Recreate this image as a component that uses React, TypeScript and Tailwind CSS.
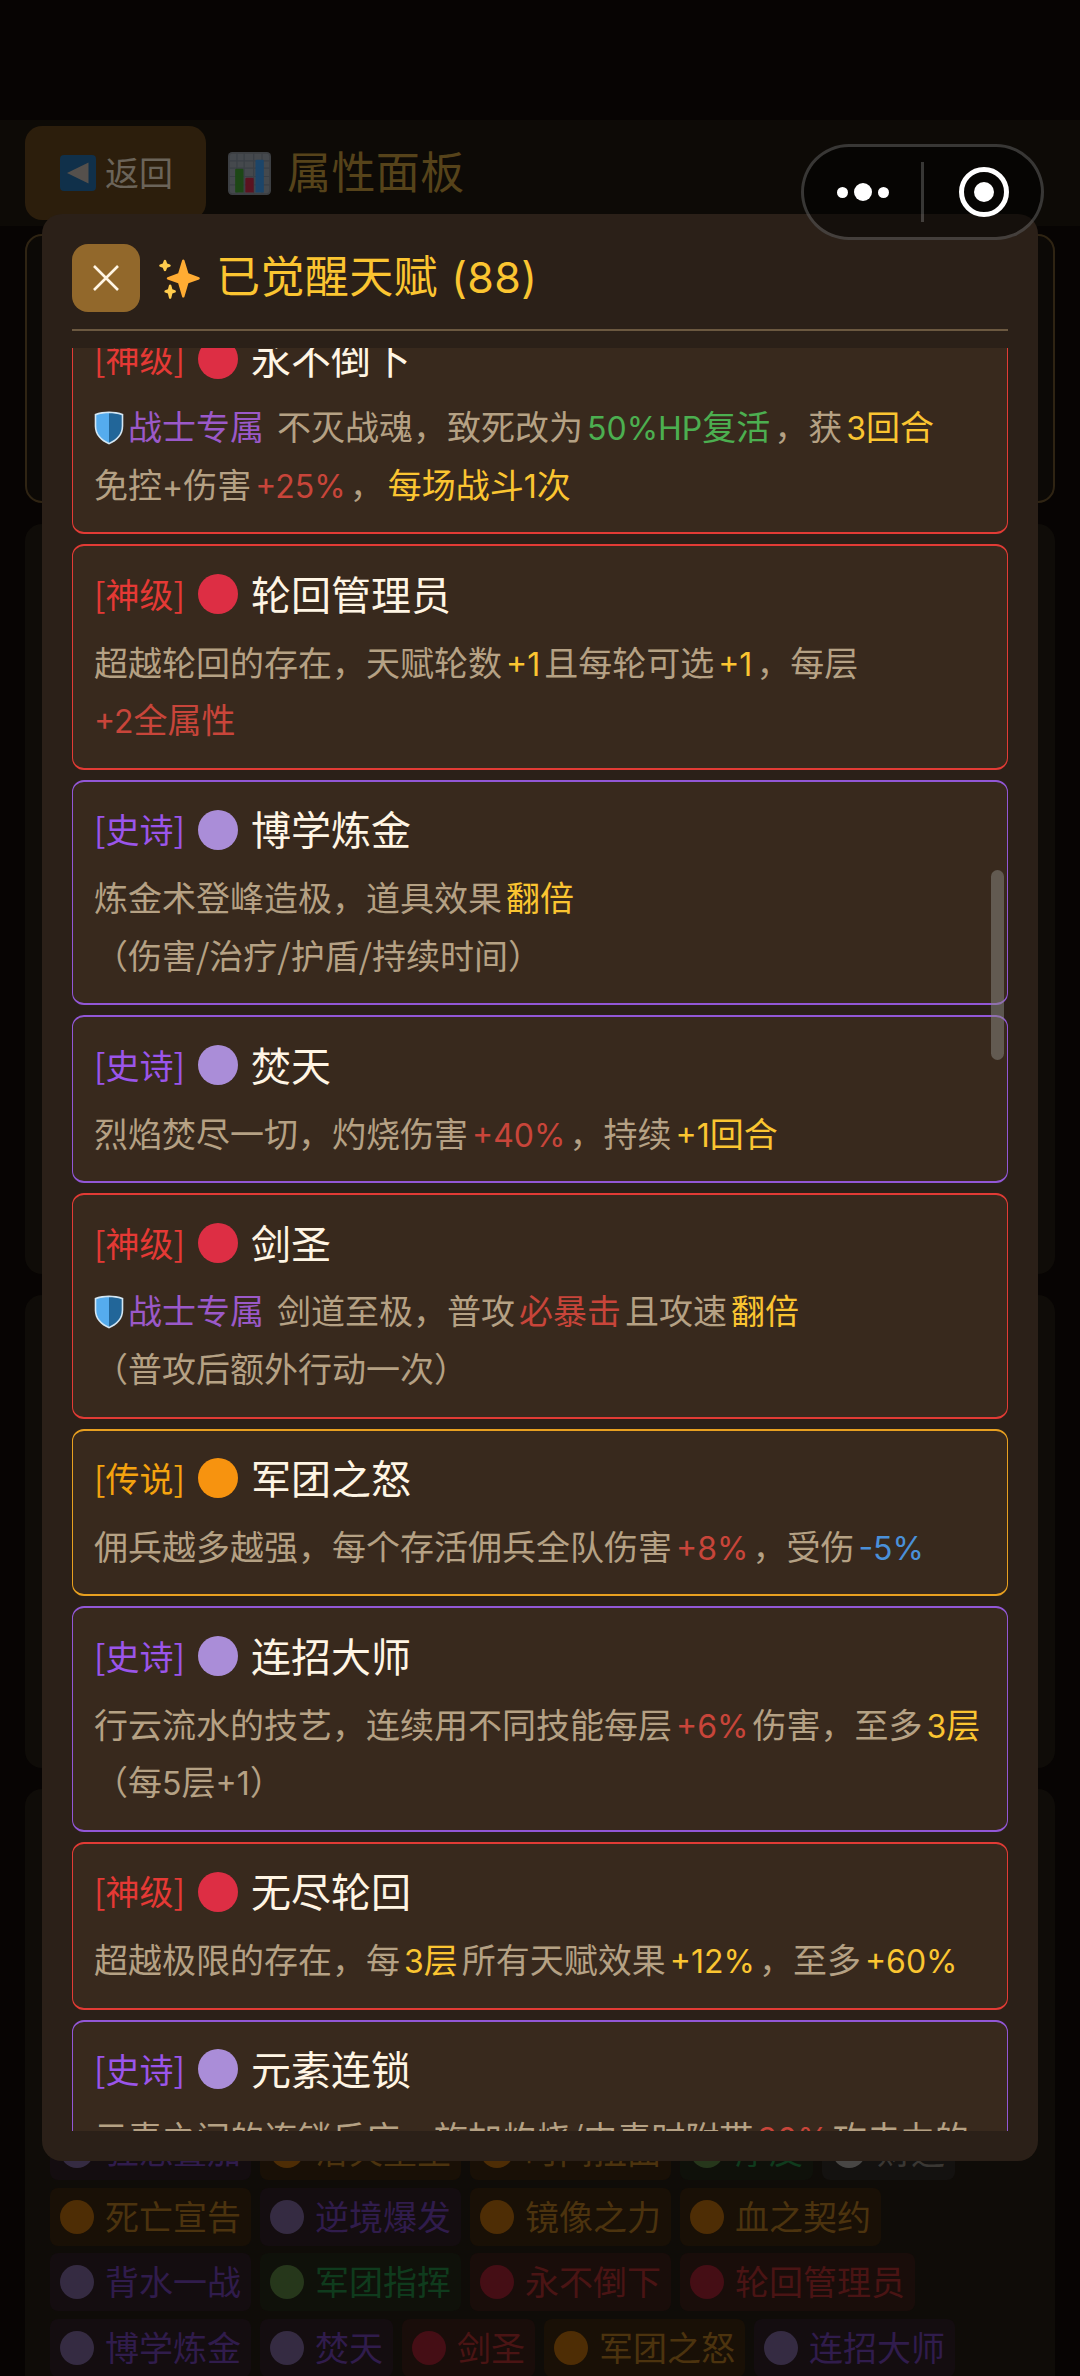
import React from "react";

type Rarity = "divine" | "epic" | "legend" | "rare" | "common";

interface Run {
	text: string;
	tone?: "gold" | "red" | "green" | "blue" | "class";
}

interface Talent {
	name: string;
	rarity: Rarity;
	lines: Run[][];
}

const rarityLabel: Record<Rarity, string> = {
	divine: "[神级]",
	epic: "[史诗]",
	legend: "[传说]",
	rare: "[稀有]",
	common: "[普通]",
};

const cardStyle: Record<Rarity, string> = {
	divine: "border-[#e23b35]",
	epic: "border-[#9257d6]",
	legend: "border-[#e8a020]",
	rare: "border-[#2fae57]",
	common: "border-gray-400",
};

const tagStyle: Record<Rarity, string> = {
	divine: "text-[#e53935]",
	epic: "text-[#9b55ea]",
	legend: "text-[#f5a30f]",
	rare: "text-[#2fae57]",
	common: "text-gray-400",
};

const dotStyle: Record<Rarity, string> = {
	divine: "bg-[#dd2e44]",
	epic: "bg-[#aa8dd8]",
	legend: "bg-[#f7930f]",
	rare: "bg-[#78b159]",
	common: "bg-[#e6e7e8]",
};

const toneStyle = {
	gold: "text-[#fbc531] mx-[4px]",
	red: "text-[#c8453a] mx-[4px]",
	green: "text-[#4caf50] mx-[4px]",
	blue: "text-[#4a90d9] mx-[4px]",
	class: "text-[#9b59c9] mr-[13px]",
};

const talents: Talent[] = [
	{
		name: "永不倒下",
		rarity: "divine",
		lines: [
			[
				{ text: "战士专属", tone: "class" },
				{ text: "不灭战魂，致死改为" },
				{ text: "50%HP复活", tone: "green" },
				{ text: "，获" },
				{ text: "3回合", tone: "gold" },
			],
			[
				{ text: "免控+伤害" },
				{ text: "+25%", tone: "red" },
				{ text: "，" },
				{ text: "每场战斗1次", tone: "gold" },
			],
		],
	},
	{
		name: "轮回管理员",
		rarity: "divine",
		lines: [
			[
				{ text: "超越轮回的存在，天赋轮数" },
				{ text: "+1", tone: "gold" },
				{ text: "且每轮可选" },
				{ text: "+1", tone: "gold" },
				{ text: "，每层" },
			],
			[{ text: "+2全属性", tone: "red" }],
		],
	},
	{
		name: "博学炼金",
		rarity: "epic",
		lines: [
			[{ text: "炼金术登峰造极，道具效果" }, { text: "翻倍", tone: "gold" }],
			[{ text: "（伤害/治疗/护盾/持续时间）" }],
		],
	},
	{
		name: "焚天",
		rarity: "epic",
		lines: [
			[
				{ text: "烈焰焚尽一切，灼烧伤害" },
				{ text: "+40%", tone: "red" },
				{ text: "，持续" },
				{ text: "+1回合", tone: "gold" },
			],
		],
	},
	{
		name: "剑圣",
		rarity: "divine",
		lines: [
			[
				{ text: "战士专属", tone: "class" },
				{ text: "剑道至极，普攻" },
				{ text: "必暴击", tone: "red" },
				{ text: "且攻速" },
				{ text: "翻倍", tone: "gold" },
			],
			[{ text: "（普攻后额外行动一次）" }],
		],
	},
	{
		name: "军团之怒",
		rarity: "legend",
		lines: [
			[
				{ text: "佣兵越多越强，每个存活佣兵全队伤害" },
				{ text: "+8%", tone: "red" },
				{ text: "，受伤" },
				{ text: "-5%", tone: "blue" },
			],
		],
	},
	{
		name: "连招大师",
		rarity: "epic",
		lines: [
			[
				{ text: "行云流水的技艺，连续用不同技能每层" },
				{ text: "+6%", tone: "red" },
				{ text: "伤害，至多" },
				{ text: "3层", tone: "gold" },
			],
			[{ text: "（每5层+1）" }],
		],
	},
	{
		name: "无尽轮回",
		rarity: "divine",
		lines: [
			[
				{ text: "超越极限的存在，每" },
				{ text: "3层", tone: "gold" },
				{ text: "所有天赋效果" },
				{ text: "+12%", tone: "gold" },
				{ text: "，至多" },
				{ text: "+60%", tone: "gold" },
			],
		],
	},
	{
		name: "元素连锁",
		rarity: "epic",
		lines: [
			[
				{ text: "元素之间的连锁反应，施加灼烧/中毒时附带" },
				{ text: "30%", tone: "red" },
				{ text: "攻击力的" },
			],
			[{ text: "元素伤害" }],
		],
	},
];

const chipStyle: Record<Rarity, string> = {
	divine: "bg-[#190d0a] text-[#4a1414]",
	epic: "bg-[#140d10] text-[#301c4c]",
	legend: "bg-[#191006] text-[#4c330e]",
	rare: "bg-[#0f110a] text-[#0f3b1d]",
	common: "bg-[#141210] text-[#3a3733]",
};

const chipDotStyle: Record<Rarity, string> = {
	divine: "bg-[#450e15]",
	epic: "bg-[#352b42]",
	legend: "bg-[#4e2d05]",
	rare: "bg-[#26371b]",
	common: "bg-[#484644]",
};

const chipRows: { name: string; rarity: Rarity }[][] = [
	[
		{ name: "狂怒叠加", rarity: "epic" },
		{ name: "浴火重生", rarity: "legend" },
		{ name: "时间扭曲", rarity: "legend" },
		{ name: "厚皮", rarity: "rare" },
		{ name: "财运", rarity: "common" },
	],
	[
		{ name: "死亡宣告", rarity: "legend" },
		{ name: "逆境爆发", rarity: "epic" },
		{ name: "镜像之力", rarity: "legend" },
		{ name: "血之契约", rarity: "legend" },
	],
	[
		{ name: "背水一战", rarity: "epic" },
		{ name: "军团指挥", rarity: "rare" },
		{ name: "永不倒下", rarity: "divine" },
		{ name: "轮回管理员", rarity: "divine" },
	],
	[
		{ name: "博学炼金", rarity: "epic" },
		{ name: "焚天", rarity: "epic" },
		{ name: "剑圣", rarity: "divine" },
		{ name: "军团之怒", rarity: "legend" },
		{ name: "连招大师", rarity: "epic" },
	],
];

const ShieldIcon = () => (
	<svg viewBox="0 0 30 34" className="inline-block w-[30px] h-[34px] mr-[4px] -mt-[6px]">
		<path d="M15 .5C19 .5 25 1.200 29.300 3v12c0 9-6 15-14.300 18.500C6.700 30 .7 24 .7 15V3C5 1.200 11 .5 15 .5z" fill="#d3e6f3" />
		<path d="M15 2.200C11 2.200 6 2.800 2.300 4.200V15c0 8 5 13.300 12.700 16.700z" fill="#55acee" />
		<path d="M15 2.200c4 0 9 .6 12.700 2V15c0 8-5 13.300-12.700 16.700z" fill="#226699" />
	</svg>
);

const SparklesIcon = () => (
	<svg viewBox="0 0 36 36" className="w-[43px] h-[43px]">
		<path
			fill="#FFAC33"
			d="M34.347 16.893l-8.899-3.294-3.323-10.891a1 1 0 0 0-1.912 0l-3.322 10.891-8.900 3.294a1 1 0 0 0 0 1.876l8.895 3.293 3.324 11.223a1 1 0 0 0 1.918-.001l3.324-11.223 8.896-3.293a.998.998 0 0 0-.001-1.875z"
		/>
		<path
			fill="#FFCC4D"
			d="M14.347 27.894l-2.314-.856-.9-3.300a.998.998 0 0 0-1.929-.001l-.9 3.300-2.313.856a1 1 0 0 0 0 1.876l2.301.853.907 3.622a1 1 0 0 0 1.940 0l.907-3.622 2.301-.853a.997.997 0 0 0 0-1.875zM10.009 6.231l-2.364-.875-.876-2.365a.999.999 0 0 0-1.876 0l-.875 2.365-2.365.875a1 1 0 0 0 0 1.876l2.365.875.875 2.365a1 1 0 0 0 1.876 0l.875-2.365 2.365-.875a1 1 0 0 0 0-1.876z"
		/>
	</svg>
);

const ChartIcon = () => (
	<svg viewBox="0 0 36 36" className="w-[43px] h-[43px]">
		<rect width="36" height="36" rx="3.500" fill="#3c3f42" />
		<rect x="1.500" y="1.500" width="33" height="33" rx="2" fill="#45494d" />
		<path d="M7.500 1.500v33M13.500 1.500v33M21.500 1.500v33M28.500 1.500v33M1.500 7.500h33M1.500 13.500h33M1.500 20.500h33M1.500 27.500h33" stroke="#3a3f45" />
		<path fill="#1d4716" d="M6 15a1 1 0 0 1 1-1h5a1 1 0 0 1 1 1v19H6z" />
		<path fill="#5b1320" d="M14.500 22.500a1 1 0 0 1 1-1h5a1 1 0 0 1 1 1V34h-7z" />
		<path fill="#1c4569" d="M23 7.500a1 1 0 0 1 1-1h5a1 1 0 0 1 1 1V34h-7z" />
	</svg>
);

const BackIcon = () => (
	<svg viewBox="0 0 36 36" className="w-[36px] h-[36px]">
		<rect width="36" height="36" rx="4" fill="#10304a" />
		<path d="M28.500 7.500v21L7 18z" fill="#55504c" />
	</svg>
);

// Latin letters and numbers are set in their own face inside the Chinese text
const MixedText = ({ text }: { text: string }) => (
	<>
		{text.split(/([A-Z0-9%+-]+)/).map((part, i) =>
			i % 2 === 1 ? (
				<span key={i} className="font-['Inter',sans-serif] text-[32px]">
					{part}
				</span>
			) : (
				part
			)
		)}
	</>
);

const TalentCard = ({ talent }: { talent: Talent }) => {
	const hasClass = talent.lines[0][0].tone === "class";

	return (
		<div
			className={`shrink-0 border-x border-y-2 rounded-[12px] bg-[#38291d] pl-[21px] pt-[20.4px] pb-[19.9px] ${cardStyle[talent.rarity]}`}
		>
			<div className="flex items-center h-[55px] mb-[10.800px]">
				<span className={`w-[104px] -mt-[2px] text-[34px] whitespace-nowrap ${tagStyle[talent.rarity]}`}>
					{rarityLabel[talent.rarity]}
				</span>
				<span className={`w-10 h-10 rounded-full mr-[13px] ${dotStyle[talent.rarity]}`} />
				<span className="-mt-[3px] text-[40px] text-[#fff5e4]">{talent.name}</span>
			</div>
			{talent.lines.map((line, i) => (
				<p
					key={i}
					className="h-[57.700px] leading-[57.700px] text-[34px] text-[#b5a184] whitespace-nowrap"
				>
					{i === 0 && hasClass && <ShieldIcon />}
					{line.map((run, j) => (
						<span key={j} className={`first:ml-0 ${run.tone ? toneStyle[run.tone] : ""}`}>
							<MixedText text={run.text} />
						</span>
					))}
				</p>
			))}
		</div>
	);
};

const Capsule = () => (
	<div className="absolute left-[801px] top-[144px] w-[243px] h-[96px] rounded-full border-[3px] border-white/20 bg-black/50 flex items-center">
		<div className="w-[117px] flex items-center justify-center gap-[6px]">
			<span className="w-[11px] h-[11px] rounded-full bg-white" />
			<span className="w-[18px] h-[18px] rounded-full bg-white" />
			<span className="w-[11px] h-[11px] rounded-full bg-white" />
		</div>
		<div className="w-[3px] h-[60px] bg-white/20" />
		<div className="flex-1 flex justify-center">
			<div className="w-[50px] h-[50px] ml-[3px] rounded-full border-[5px] border-white flex items-center justify-center">
				<span className="w-5 h-5 rounded-full bg-white" />
			</div>
		</div>
	</div>
);

const App = () => {
	return (
		<div className="relative w-[1080px] h-[2376px] overflow-hidden bg-[#070403] font-normal font-['Noto_Sans_CJK_SC',sans-serif]">
			<div className="h-[120px]" />
			<header className="h-[106px] bg-[#0d0a06] flex items-start pl-[25px] pt-[6px]">
				<div className="w-[181px] h-[94px] rounded-[17px] bg-[#2c1e0c] text-[#6b6459] flex items-center pl-[35px]">
					<BackIcon />
					<span className="text-[34px] ml-[9px] -mt-[3px]">返回</span>
				</div>
				<div className="flex items-center h-[94px] ml-[22px] text-[#56431a]">
					<ChartIcon />
					<span className="text-[44px] tracking-[0.400px] ml-[16px] -mt-[6px]">属性面板</span>
				</div>
			</header>

			<main className="px-[25px] pt-[8px]">
				<div className="h-[269px] rounded-[17px] border-2 border-[#2f2413] bg-[#0c0906]" />
				<div className="h-[750px] mt-[21px] rounded-[17px] bg-[#0f0c08]" />
				<div className="h-[473px] mt-[21px] rounded-[17px] bg-[#0f0c08]" />
				<div className="h-[640px] mt-[21px] rounded-[17px] bg-[#0f0c08] pl-[25px] pt-[333px]">
					{chipRows.map((row, i) => (
						<div key={i} className="flex gap-[9px] mb-[7.500px]">
							{row.map((chip) => (
								<div
									key={chip.name}
									className={`flex items-center h-[58px] px-[10px] rounded-[8px] ${chipStyle[chip.rarity]}`}
								>
									<span className={`w-[34px] h-[34px] rounded-full mr-[11px] ${chipDotStyle[chip.rarity]}`} />
									<span className="text-[34px] leading-[56px] -mt-[2px] whitespace-nowrap">{chip.name}</span>
								</div>
							))}
						</div>
					))}
				</div>
			</main>

			<section className="absolute left-[42px] top-[214px] w-[996px] h-[1947px] rounded-[20px] bg-[#2b2018] px-[30px] pt-[30px] flex flex-col">
				<div className="flex items-center shrink-0 h-[68px]">
					<button className="w-[68px] h-[68px] rounded-[16px] bg-[#92682b] flex items-center justify-center">
						<svg viewBox="0 0 26 26" className="w-[26px] h-[26px]" stroke="#fff5e4" strokeWidth="2.600">
							<path d="M1 1l24 24M25 1L1 25" />
						</svg>
					</button>
					<div className="flex items-center ml-[18px] text-[#fbc531]">
						<SparklesIcon />
						<h2 className="text-[44px] tracking-[0.400px] ml-[15px] -mt-[6px]">
							已觉醒天赋 <span className="font-['Inter',sans-serif] text-[43px] ml-[3px]">(88)</span>
						</h2>
					</div>
				</div>
				<div className="shrink-0 h-[2px] mt-[17px] bg-[#6b5840]" />
				<div className="relative mt-[17px] h-[1783px] shrink-0 overflow-hidden">
					<div className="flex flex-col gap-[10px] -mt-[39px]">
						{talents.map((talent) => (
							<TalentCard key={talent.name} talent={talent} />
						))}
					</div>
					<div className="absolute right-[4px] top-[522px] w-[13px] h-[190px] rounded-full bg-[#8c8c86]/50" />
				</div>
			</section>

			<Capsule />
		</div>
	);
};

export default App;
